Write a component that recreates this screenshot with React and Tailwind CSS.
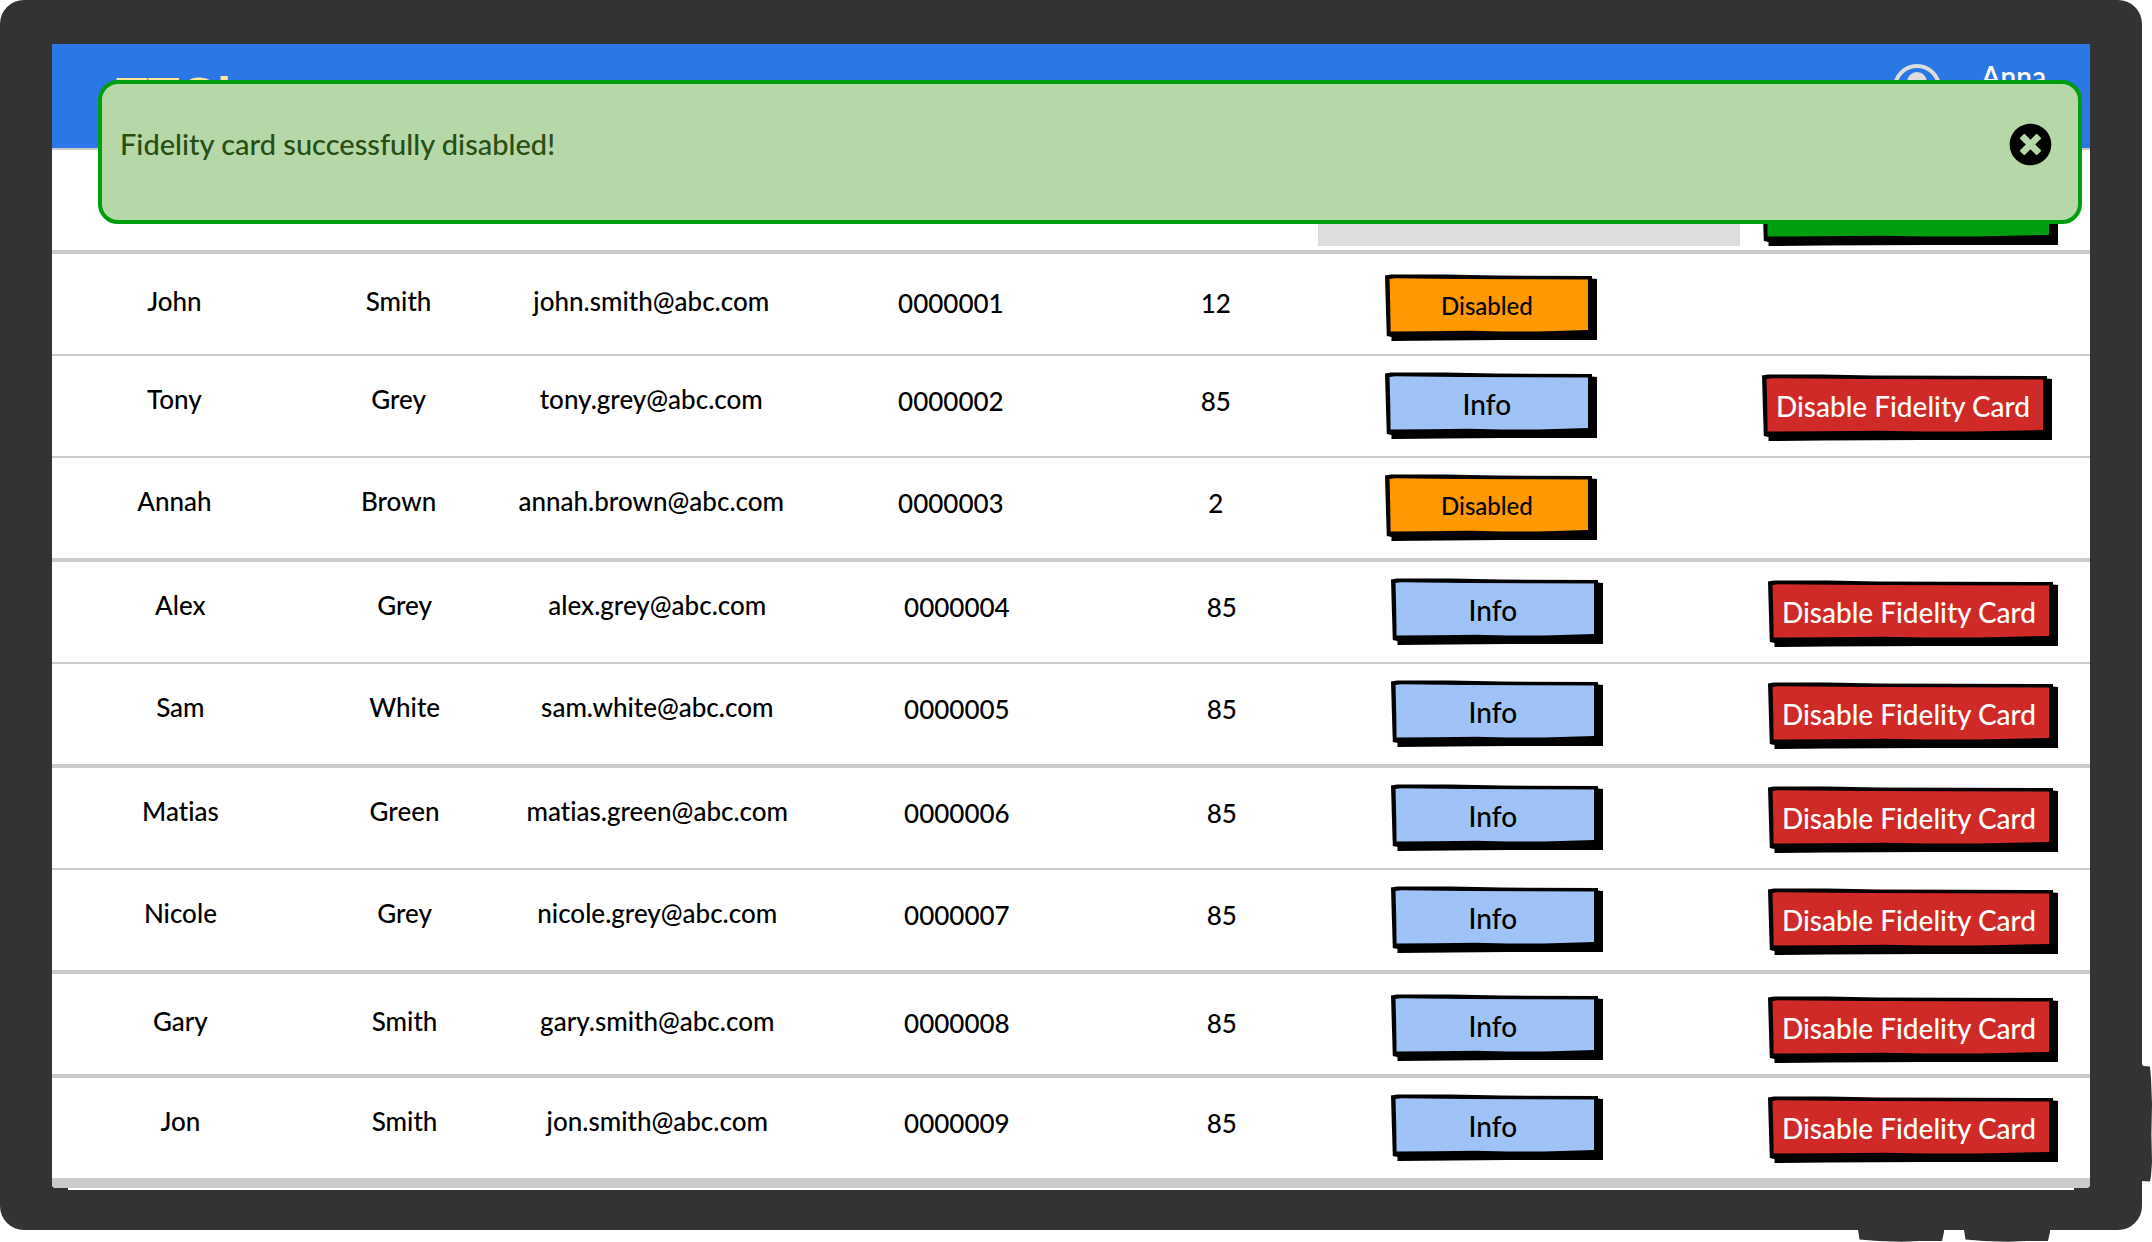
import { useState } from "react";
import { FaTimesCircle } from "react-icons/fa";

const customers = [
  { name: "John", surname: "Smith", email: "john.smith@abc.com", card: "0000001", points: 12, disabled: true, low: true, inset: true, line: "thin" },
  { name: "Tony", surname: "Grey", email: "tony.grey@abc.com", card: "0000002", points: 85, inset: true, line: "thin" },
  { name: "Annah", surname: "Brown", email: "annah.brown@abc.com", card: "0000003", points: 2, disabled: true, inset: true, line: "thick" },
  { name: "Alex", surname: "Grey", email: "alex.grey@abc.com", card: "0000004", points: 85, line: "thin" },
  { name: "Sam", surname: "White", email: "sam.white@abc.com", card: "0000005", points: 85, line: "thick" },
  { name: "Matias", surname: "Green", email: "matias.green@abc.com", card: "0000006", points: 85, line: "thin" },
  { name: "Nicole", surname: "Grey", email: "nicole.grey@abc.com", card: "0000007", points: 85, line: "thick" },
  { name: "Gary", surname: "Smith", email: "gary.smith@abc.com", card: "0000008", points: 85, low: true, line: "thick" },
  { name: "Jon", surname: "Smith", email: "jon.smith@abc.com", card: "0000009", points: 85, line: "end" },
];

const lines = {
  thin: "border-b-2",
  thick: "border-b-4",
  end: "border-b-[10px]",
};

/* Hand-drawn frame with a hard drop shadow. */
function SketchFrame({ width, fill }) {
  const w = width;
  return (
    <svg className="absolute inset-0" width={w} height="67" viewBox={`0 0 ${w} 67`} aria-hidden="true">
      <path
        d={`M0 1.5 L6 0.4 L60 0.6 L110 1.6 L${w - 5} 2 L${w - 5} 4.5 L${w} 5 L${w} 66 L${w * 0.55} 66 L60 66.6 L6.5 67 L6.5 63 L1.8 62 L0.8 30 Z`}
        fill="#000"
      />
      <path
        d={`M4.5 5 L10 4.3 L${w * 0.35} 5 L${w - 9} 5.6 L${w - 9} 56 L${w * 0.72} 57.5 L${w * 0.55} 57.4 L${w * 0.4} 56.8 L${w * 0.2} 57.2 L5.6 57.6 L5.2 30 Z`}
        fill={fill}
      />
    </svg>
  );
}

function SketchButton({ kind, children, ...rest }) {
  const kinds = {
    info: { width: 212, fill: "#9fc3f7", box: "w-[212px] text-[28px] text-black" },
    disabled: { width: 212, fill: "#ff9900", box: "w-[212px] text-[24px] text-black" },
    danger: { width: 290, fill: "#cf2a28", box: "w-[290px] text-[28px] text-white" },
    add: { width: 296, fill: "#009e0f", box: "w-[296px] text-[28px] text-white" },
  };
  const k = kinds[kind];
  return (
    <button type="button" className={`relative block h-[67px] shrink-0 cursor-pointer pr-2 pb-1 font-medium whitespace-nowrap ${k.box}`} {...rest}>
      <SketchFrame width={k.width} fill={k.fill} />
      <span className="relative">{children}</span>
    </button>
  );
}

function Row({ c }) {
  const cell = `border-[#cbcbcb] p-0 ${lines[c.line]}`;
  const top = c.low ? "pt-5" : "pt-4";
  const shift = c.inset ? "pr-3" : "";
  const text = `h-[100px] text-center leading-[54px] ${top} ${shift}`;
  const digits = `h-[100px] text-center leading-[58px] ${top} ${shift}`;
  return (
    <tr>
      <td className={cell}><div className={text}>{c.name}</div></td>
      <td className={cell}><div className={text}>{c.surname}</div></td>
      <td className={cell}><div className={text}>{c.email}</div></td>
      <td className={cell}><div className={digits}>{c.card}</div></td>
      <td className={cell}><div className={digits}>{c.points}</div></td>
      <td className={cell}>
        <div className={`flex h-[100px] justify-center ${top} ${shift}`}>
          {c.disabled ? <SketchButton kind="disabled">Disabled</SketchButton> : <SketchButton kind="info">Info</SketchButton>}
        </div>
      </td>
      <td className={cell}>
        <div className={`flex h-[100px] justify-end ${c.low ? "pt-[22px]" : "pt-[18px]"} ${c.inset ? "pr-[38px]" : "pr-8"}`}>
          {!c.disabled && <SketchButton kind="danger">Disable Fidelity Card</SketchButton>}
        </div>
      </td>
    </tr>
  );
}

function Header() {
  return (
    <header className="flex h-[106px] items-start justify-between border-b-2 border-[#cbcbcb] bg-[#2b78e4] pr-11 pl-16">
      <span className="pt-6 font-['Liberation_Sans',sans-serif] text-[52px] leading-[56px] font-bold text-[#ffe599]">TTCi</span>
      <div className="flex items-start gap-10 pt-5">
        <svg width="48" height="48" viewBox="0 0 48 48" aria-hidden="true">
          <circle cx="24" cy="24" r="22" fill="none" stroke="#ddd" strokeWidth="4" />
          <circle cx="24" cy="18" r="10" fill="#ddd" />
          <path d="M8 38 C12 30 36 30 40 38 C34 46 14 46 8 38 Z" fill="#ddd" />
        </svg>
        <span className="text-[28px] leading-6 font-semibold text-white">Anna</span>
      </div>
    </header>
  );
}

export default function App() {
  const [open, setOpen] = useState(true);
  return (
    <div className="bg-white pr-[10px] pb-3 font-['Lato',sans-serif] text-[26px] font-medium text-black [font-variant-ligatures:none]">
      <div className="relative rounded-3xl bg-[#333] px-[52px] pt-11 pb-10">
        <main className="relative overflow-hidden rounded-b-sm bg-white">
          <Header />
          <div className="flex h-[104px] items-end justify-end gap-[22px] border-b-4 border-[#cbcbcb] pr-8 pb-1">
            <input type="text" aria-label="Search customers" className="h-[52px] w-[422px] bg-[#ddd] px-4" />
            <SketchButton kind="add" aria-label="Add" />
          </div>
          <table className="w-full table-fixed border-separate border-spacing-0">
            <colgroup>
              <col className="w-[12.6%]" />
              <col className="w-[9.4%]" />
              <col className="w-[15.4%]" />
              <col className="w-[14%]" />
              <col className="w-[12%]" />
              <col className="w-[15%]" />
              <col />
            </colgroup>
            <tbody>
              {customers.map((c) => <Row key={c.card} c={c} />)}
            </tbody>
          </table>
          {open && (
            <div role="alert" className="absolute top-9 right-2 left-[46px] flex h-36 items-center justify-between rounded-[20px] border-4 border-[#009e0f] bg-[#b6d7a8] pr-[26px] pb-4 pl-[18px]">
              <p className="text-[29px] text-[#274e13]">Fidelity card successfully disabled!</p>
              <button type="button" aria-label="Close" className="cursor-pointer text-black" onClick={() => setOpen(false)}>
                <FaTimesCircle size={43} />
              </button>
            </div>
          )}
        </main>
        <div className="mx-4 h-[2px] bg-white" />
        <svg className="absolute right-[-10px] bottom-12 text-[#333]" width="10" height="118" viewBox="0 0 10 118" fill="currentColor" aria-hidden="true">
          <path d="M0 0 L1 2 L8 2.5 L9 14 L10 40 L9.4 70 L10 98 L9 112 L8 117.5 L0 117 Z" />
        </svg>
        <svg className="absolute right-[92px] bottom-[-12px] text-[#333]" width="192" height="12" viewBox="0 0 192 12" fill="currentColor" aria-hidden="true">
          <path d="M0 0 H86 V2 L84 11 L62 11 L44 11.8 L20 11 L1.5 9.5 L0.5 3 Z" />
          <path d="M106 0 H192 V2 L190 11 L168 11 L150 11.8 L126 11 L107.5 9.5 L106.5 3 Z" />
        </svg>
      </div>
    </div>
  );
}
